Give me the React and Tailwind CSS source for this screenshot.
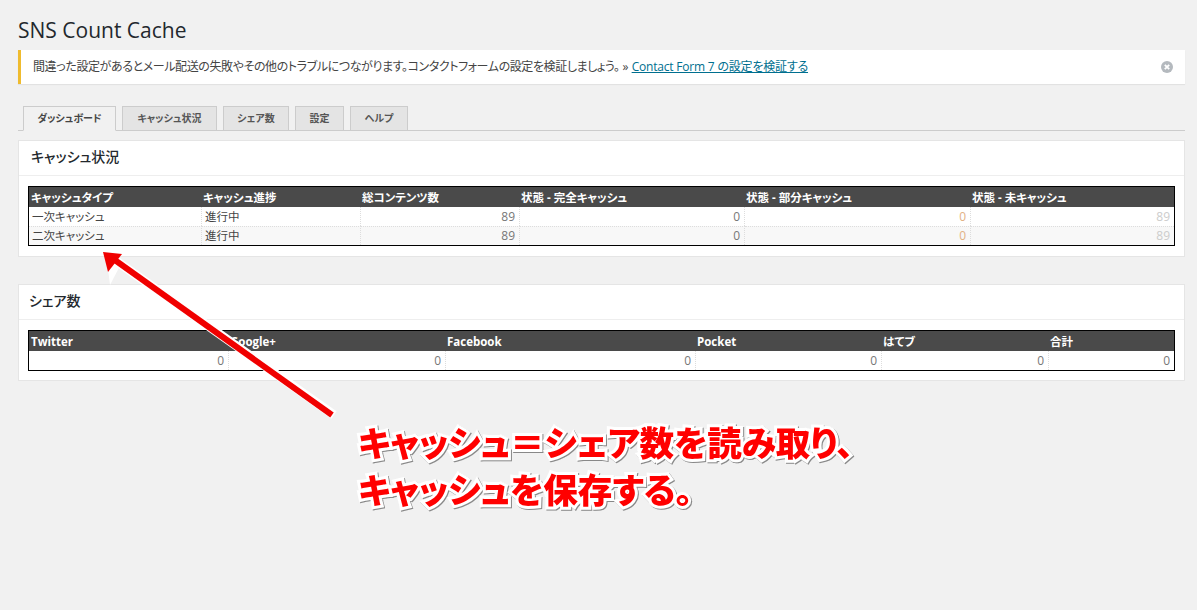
const jp = "font-['Open_Sans','Noto_Sans_CJK_JP',sans-serif]";

function Table({ cols, head, rows }) {
  return (
    <div className="border border-black">
      <table className="w-full table-fixed border-separate border-spacing-0 text-[11.5px] leading-[18px]">
        <colgroup>
          {cols.map((w, i) => (
            <col key={i} style={{ width: w }} />
          ))}
        </colgroup>
        <thead>
          <tr className="bg-[#4a4a4a] text-white">
            {head.map((h) => (
              <th key={h} className="h-[20px] p-0 pt-px pl-px text-left font-bold first:pl-[2px]">
                {h}
              </th>
            ))}
          </tr>
        </thead>
        <tbody>
          {rows.map((r, i) => (
            <tr key={i} className={i === 1 ? "bg-[#f8f8f8]" : ""}>
              {r.map((c, j) => (
                <td
                  key={j}
                  className={`h-[19px] border-r border-dotted border-[#dddddd] p-0 pr-[4px] pl-[3px] last:border-r-0 ${i === 1 ? "border-t" : ""} ${c.cls || ""}`}
                >
                  {c.t}
                </td>
              ))}
            </tr>
          ))}
        </tbody>
      </table>
    </div>
  );
}

function Card({ title, className, children, pad, bottom }) {
  return (
    <section className={`mr-[12px] border border-[#e5e5e5] bg-white ${className}`}>
      <h2 className={`flex h-[35px] items-center border-b border-[#eeeeee] pb-[4px] text-[14px] font-medium text-[#23282d] ${pad}`}>
        {title}
      </h2>
      <div className={`px-[9px] pt-[10px] ${bottom}`}>{children}</div>
    </section>
  );
}

const num = "text-right text-[12px] text-[#777777]";
const row = (a) => [
  { t: a, cls: "text-[#444444]" },
  { t: "進行中", cls: "text-[#444444]" },
  { t: "89", cls: num },
  { t: "0", cls: num },
  { t: "0", cls: "text-right text-[12px] text-[#e2b184]" },
  { t: "89", cls: "text-right text-[12px] text-[#cccccc]" },
];

export default function App() {
  return (
    <div className={`relative h-[610px] w-[1197px] overflow-hidden bg-[#f1f1f1] pl-[18px] [font-feature-settings:'palt'] ${jp}`}>
      <h1 className="pt-[18px] text-[21px] leading-[24px] text-[#23282d]">SNS Count Cache</h1>

      <div className="mt-[8px] mr-[12px] flex h-[34px] items-center justify-between border-l-[3px] border-[#efbb2e] bg-white pr-[12px] pl-[12px] text-[12px] text-[#444444] shadow-[0_1px_1px_rgba(0,0,0,0.06)]">
        <p>
          <span className="tracking-[-0.4px]">
            間違った設定があるとメール配送の失敗やその他のトラブルにつながります。コンタクトフォームの設定を検証しましょう。
          </span>{" "}
          »{" "}
          <a className="tracking-[-0.2px] text-[#006f8f] underline">Contact Form 7 の設定を検証する</a>
        </p>
        <svg width="12" height="12" viewBox="0 0 12 12" className="shrink-0">
          <circle cx="6" cy="6" r="6" fill="#b4b9be" />
          <path d="M3.8 3.8l4.4 4.4M8.2 3.8L3.8 8.2" stroke="#fff" strokeWidth="1.8" />
        </svg>
      </div>

      <nav className="mt-[22px] mr-[12px] flex h-[25px] items-start gap-[6px] border-b border-[#cccccc] pl-[5px] text-[10px] font-bold">
        <a className="flex h-[25px] w-[93px] items-center justify-center border border-[#cccccc] border-b-[#f1f1f1] bg-[#f1f1f1] text-[#444444]">
          ダッシュボード
        </a>
        <a className="flex h-[24px] w-[95px] items-center justify-center border border-b-0 border-[#cccccc] bg-[#e4e4e4] text-[#555555]">
          キャッシュ状況
        </a>
        <a className="flex h-[24px] w-[66px] items-center justify-center border border-b-0 border-[#cccccc] bg-[#e4e4e4] text-[#555555]">
          シェア数
        </a>
        <a className="flex h-[24px] w-[49px] items-center justify-center border border-b-0 border-[#cccccc] bg-[#e4e4e4] text-[#555555]">
          設定
        </a>
        <a className="flex h-[24px] w-[58px] items-center justify-center border border-b-0 border-[#cccccc] bg-[#e4e4e4] text-[#555555]">
          ヘルプ
        </a>
      </nav>

      <Card title="キャッシュ状況" className="mt-[9px]" pad="pl-[12px]" bottom="pb-[10px]">
        <Table
          cols={[173, 159, 159, 225, 226, 203]}
          head={["キャッシュタイプ", "キャッシュ進捗", "総コンテンツ数", "状態 - 完全キャッシュ", "状態 - 部分キャッシュ", "状態 - 未キャッシュ"]}
          rows={[row("一次キャッシュ"), row("二次キャッシュ")]}
        />
      </Card>

      <Card title="シェア数" className="mt-[27px]" pad="pl-[10px]" bottom="pb-[9px]">
        <Table
          cols={[200, 217, 250, 186, 167, 125]}
          head={["Twitter", "Google+", "Facebook", "Pocket", "はてブ", "合計"]}
          rows={[[0, 0, 0, 0, 0, 0].map((t) => ({ t, cls: num }))]}
        />
      </Card>

      <svg className="pointer-events-none absolute inset-0" width="1197" height="610">
        <path d="M106 253L110 285L122 262Z" fill="#fff" />
        <path d="M334 415L112 258" stroke="#fff" strokeWidth="9" />
        <path d="M332 415L112 258" stroke="#f00000" strokeWidth="6" />
        <path d="M103 252L122 254L108 272Z" fill="#f00000" />
      </svg>

      <p className="absolute top-[419px] left-[358px] whitespace-nowrap text-[34.6px] leading-[47px] font-black text-[#ff0000] [-webkit-text-stroke:6px_white] [paint-order:stroke_fill] [filter:drop-shadow(1px_1px_0_#888888)]">
        キャッシュ＝シェア数を読み取り、
        <br />
        キャッシュを保存する。
      </p>
    </div>
  );
}
